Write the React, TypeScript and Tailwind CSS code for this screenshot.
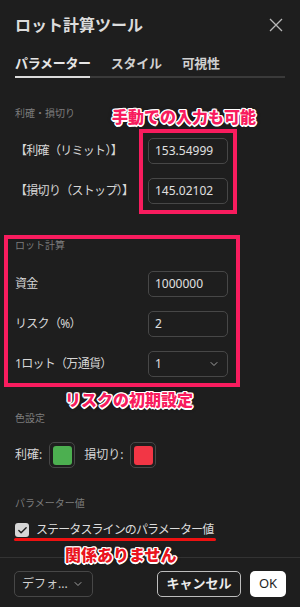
import { ChevronDown, Check } from 'lucide-react';

const outlinePink =
  '[text-shadow:1px_1px_0_#fff,-1px_-1px_0_#fff,1px_-1px_0_#fff,-1px_1px_0_#fff,0_1.5px_0_#fff,0_-1.5px_0_#fff,1.5px_0_0_#fff,-1.5px_0_0_#fff,0_0_4px_rgba(0,0,0,0.6)]';

function NumInput({ value }: { value: string }) {
  return (
    <div className="w-[80px] h-[26px] border border-[#474747] rounded-[5px] flex items-center px-[6px] text-[12px] text-[#e0e0e0]">
      {value}
    </div>
  );
}

function Row({ label, children, className = '' }: { label: string; children: React.ReactNode; className?: string }) {
  return (
    <div className={`grid grid-cols-[133px_80px] items-center ${className}`}>
      <div className="text-[12px] tracking-[-0.7px] text-[#d6d6d6] whitespace-nowrap">{label}</div>
      {children}
    </div>
  );
}

function Swatch({ color }: { color: string }) {
  return (
    <div className="w-[26px] h-[26px] border border-[#474747] rounded-[5px] flex items-center justify-center">
      <div className="w-[19px] h-[19px] rounded-[3px]" style={{ background: color }} />
    </div>
  );
}

export default function App() {
  return (
    <div
      className="relative w-[300px] h-[607px] bg-[#1e1e1e] overflow-hidden"
      style={{ fontFamily: '"Noto Sans", "Noto Sans CJK JP", sans-serif' }}
    >
      <div className="px-[15px]">
        {/* header */}
        <div className="pt-[15px] flex items-center justify-between h-[35px]">
          <div className="text-[16px] leading-5 font-bold text-[#dcdcdc]">ロット計算ツール</div>
          <svg width="14" height="14" viewBox="0 0 14 14" className="mr-[2px]">
            <path d="M1 1L13 13M13 1L1 13" stroke="#b8b8b8" strokeWidth="1.3" />
          </svg>
        </div>

        {/* tabs */}
        <div className="mt-[19px] flex gap-5 text-[13px] leading-[18px] font-bold tracking-[-0.3px]">
          <div className="text-[#e6e6e6]">パラメーター</div>
          <div className="text-[#d0d0d0]">スタイル</div>
          <div className="text-[#d0d0d0]">可視性</div>
        </div>
        <div className="mt-[4px] flex h-[2px]">
          <div className="w-[75px] bg-[#dcdcdc]" />
          <div className="flex-1 bg-[#3a3a3a]" />
        </div>

        <div className="mt-[28px] text-[10px] leading-[14px] text-[#7c7c7c]">利確・損切り</div>
        <Row label="【利確（リミット）】" className="mt-[18px]">
          <NumInput value="153.54999" />
        </Row>
        <Row label="【損切り（ストップ）】" className="mt-[14px]">
          <NumInput value="145.02102" />
        </Row>

        <div className="mt-[34px] text-[10px] leading-[14px] text-[#7c7c7c]">ロット計算</div>
        <Row label="資金" className="mt-[19px]">
          <NumInput value="1000000" />
        </Row>
        <Row label="リスク（%）" className="mt-[14px]">
          <NumInput value="2" />
        </Row>
        <Row label="1ロット（万通貨）" className="mt-[14px]">
          <div className="w-[80px] h-[26px] border border-[#474747] rounded-[5px] flex items-center justify-between pl-[6px] pr-[7px] text-[12px] text-[#e0e0e0]">
            <span>1</span>
            <ChevronDown size={12} color="#a0a0a0" />
          </div>
        </Row>

        <div className="mt-[34px] text-[10px] leading-[14px] text-[#7c7c7c]">色設定</div>
        <div className="mt-[17px] flex items-center text-[12px] text-[#d6d6d6]">
          <span>利確:</span>
          <div className="ml-[7px]">
            <Swatch color="#4caf50" />
          </div>
          <span className="ml-[9px]">損切り:</span>
          <div className="ml-[7px]">
            <Swatch color="#f23645" />
          </div>
        </div>

        <div className="mt-[28px] text-[10px] leading-[14px] text-[#7c7c7c]">パラメーター値</div>
        <div className="mt-[12px] flex items-center h-[16px] gap-[7px]">
          <div className="w-[14px] h-[14px] rounded-[3px] bg-[#d6d6d6] flex items-center justify-center">
            <Check size={11} color="#1e1e1e" strokeWidth={3} />
          </div>
          <span className="text-[12px] tracking-[-0.9px] text-[#dcdcdc]">ステータスラインのパラメーター値</span>
        </div>
      </div>

      <div className="mt-[19px] h-px bg-[#333333]" />

      {/* footer */}
      <div className="mt-[13px] px-[14px] flex items-center">
        <div className="w-[79px] h-[26px] border border-[#474747] rounded-[5px] flex items-center justify-between pl-[7px] pr-[8px] text-[12px] text-[#d0d0d0]">
          <span>デフォ...</span>
          <ChevronDown size={12} color="#a0a0a0" />
        </div>
        <div className="ml-auto w-[84px] h-[26px] border border-[#bdbdbd] rounded-[5px] flex items-center justify-center text-[13px] font-bold text-[#ececec]">
          キャンセル
        </div>
        <div className="ml-[9px] w-[36px] h-[26px] bg-white rounded-[5px] flex items-center justify-center text-[13px] text-[#1e1e1e]">
          OK
        </div>
      </div>

      {/* annotations */}
      <div className={`absolute left-[112px] top-[107px] text-[16px] leading-5 font-black text-[#f81c5e] whitespace-nowrap ${outlinePink}`}>
        手動での入力も可能
      </div>
      <div className="absolute left-[139px] top-[129px] w-[98px] h-[85px] border-4 border-[#f81c5e] pointer-events-none" />
      <div className="absolute left-[4px] top-[235px] w-[236px] h-[152px] border-4 border-[#f81c5e] pointer-events-none" />
      <div className={`absolute left-[65px] top-[390px] text-[16px] leading-5 font-black text-[#f81c5e] whitespace-nowrap ${outlinePink}`}>
        リスクの初期設定
      </div>
      <div className="absolute left-[14px] top-[538px] w-[202px] h-[3px] rounded-full bg-[#ee1111]" />
      <div className={`absolute left-[65px] top-[545px] text-[16px] leading-5 font-black text-[#ea1420] whitespace-nowrap ${outlinePink}`}>
        関係ありません
      </div>
    </div>
  );
}
